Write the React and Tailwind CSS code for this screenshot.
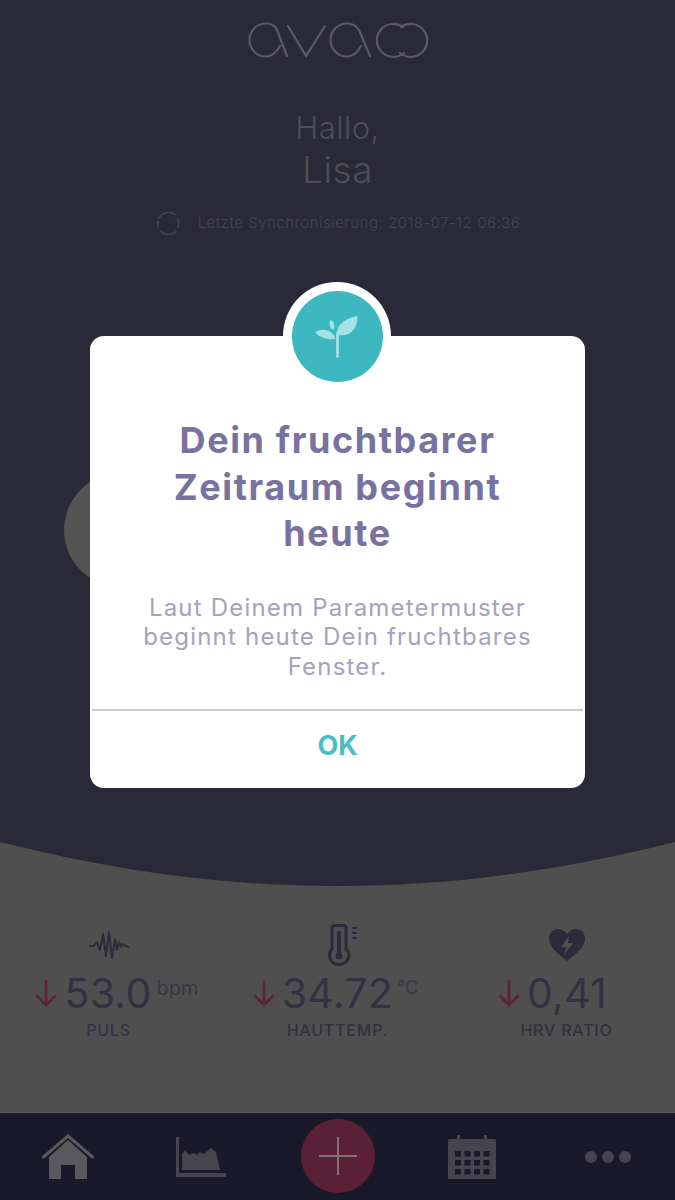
import React from 'react'

const sans = 'font-["Inter","Liberation_Sans",sans-serif]'

const AvaLogo = () => (
  <svg width="180" height="36" viewBox="249 22 180 36" fill="none" stroke="#5a5a60" strokeWidth="2.2" strokeLinecap="round">
    <path d="M281 46C277 53 272 56.500 267 56.500A16.500 16.500 0 0 1 267 23.500C272 23.500 276 25 278 30L288 56" />
    <path d="M289 26L307 56L326 26" />
    <path d="M362 46C358 53 353 56.500 348 56.500A16.500 16.500 0 0 1 348 23.500C353 23.500 357 25 360 30L371 56" />
    <path d="M404 27A16.500 16.500 0 1 0 405 53" />
    <path d="M402 27A16.500 16.500 0 1 1 401 53" />
  </svg>
)

const SyncIcon = () => (
  <svg width="26" height="26" viewBox="0 0 26 26" fill="none" stroke="#45454f" strokeWidth="1.6" strokeLinecap="round">
    <path d="M4 8A11 11 0 0 1 20 4.500" />
    <path d="M23 9A11 11 0 0 1 23 17" />
    <path d="M21 21.500A11 11 0 0 1 6 21.500" />
    <path d="M3 17A11 11 0 0 1 3 11" />
  </svg>
)

const SproutIcon = () => (
  <svg width="44" height="44" viewBox="315.500 314 44 44" fill="#a4e2e5">
    <rect x="336.600" y="332" width="2.800" height="26" rx="1.400" />
    <path d="M338 335C336 327 343 319 358 316C358 328 352 337 338 335Z" />
    <path d="M336 339C328 340 320 338 316 332C322 328 333 329 336 339Z" />
    <path d="M334 330C330 328 329 323 331 320C335 322 336 326 334 330Z" />
  </svg>
)

const PulseIcon = () => (
  <svg width="40" height="30" viewBox="0 0 40 30" fill="none" stroke="#2c2b3c" strokeWidth="2" strokeLinecap="round" strokeLinejoin="round">
    <path d="M1 16H5L8 12L11 20L14 4L17 26L20 2L23 28L26 9L28 20L30 12L32 17L34 14L39 17" />
  </svg>
)

const ThermoIcon = () => (
  <svg width="32" height="42" viewBox="0 0 32 42" fill="none" stroke="#2c2b3c" strokeWidth="3" strokeLinecap="round">
    <path d="M4 25V4C4 2.500 5 1.500 6.500 1.500H15.500C17 1.500 18 2.500 18 4V25C20.500 27 21 29 21 31.500C21 36.500 16.500 40.500 11 40.500C5.500 40.500 1.500 36.500 1.500 31.500C1.500 29 2 27 4 25Z" />
    <path d="M11 9V30" strokeWidth="4" />
    <circle cx="11" cy="32" r="3.600" fill="#2c2b3c" stroke="none" />
    <path d="M25 4H28M25 9H28M25 14H28" strokeWidth="2" />
  </svg>
)

const HeartBoltIcon = () => (
  <svg width="38" height="34" viewBox="0 0 38 34" fill="#2c2b3c">
    <path fillRule="evenodd" d="M19 33C12 27 1 20 1 10.500C1 4.500 5.500 1 10 1C14 1 17 3 19 6C21 3 24 1 28 1C32.500 1 37 4.500 37 10.500C37 20 26 27 19 33ZM21 8L13 19H18L16 27L25 15H20Z" />
  </svg>
)

const HomeIcon = () => (
  <svg width="52" height="46" viewBox="0 0 52 46" fill="#59595d">
    <path d="M7 23L26 6L45 23V45H33V31H19V45H7Z" />
    <path d="M1.500 23L26 2L50.500 23" fill="none" stroke="#59595d" strokeWidth="3" strokeLinecap="round" />
  </svg>
)

const ChartIcon = () => (
  <svg width="52" height="42" viewBox="0 0 52 42" fill="#46454f">
    <path d="M1 1H4V37H51V41H1Z" />
    <path d="M7 34V18L10 14L14 19L19 17L22 19L25 16L29 18L36 12L41 16L45 34Z" />
  </svg>
)

const CalendarIcon = () => {
  const cells = []
  for (let r = 0; r < 3; r++) {
    for (let c = 0; c < 4; c++) {
      cells.push(<rect key={`${r}-${c}`} x={8 + c * 9.500} y={17 + r * 9} width="6" height="5.500" fill="#1a1929" />)
    }
  }
  return (
    <svg width="50" height="46" viewBox="0 0 50 46" fill="#46454f">
      <rect x="1" y="5" width="48" height="40" rx="1.500" />
      <rect x="10" y="1" width="3" height="9" />
      <rect x="37" y="1" width="3" height="9" />
      {cells}
    </svg>
  )
}

const DownArrow = () => (
  <svg width="22" height="28" viewBox="0 0 22 28" fill="none" stroke="#5e2237" strokeWidth="2.6" strokeLinecap="round" strokeLinejoin="round" className="shrink-0">
    <path d="M11 2V26M2 17L11 26L20 17" />
  </svg>
)

const Stat = ({ icon, value, unit, label, offset, iconBox }) => (
  <div className="flex w-[229px] shrink-0 flex-col items-center">
    <div className={`flex h-[46px] items-center justify-center ${iconBox}`}>{icon}</div>
    <div className={`mt-[1px] flex h-[48px] items-center ${offset}`}>
      <DownArrow />
      <span className="ml-[7px] text-[41px] leading-none font-normal tracking-[0.3px] text-[#32313f]">{value}</span>
      {unit}
    </div>
    <div className="mt-[3px] text-[16px] leading-5 font-medium tracking-[0.8px] text-[#32313f]">{label}</div>
  </div>
)

export default function App() {
  return (
    <div className={`relative flex h-[1200px] w-[675px] flex-col overflow-hidden bg-[#4f4f4f] ${sans}`}>
      {/* dimmed home screen */}
      <div className="relative flex h-[842px] shrink-0 flex-col items-center bg-[#2a2937] pt-[22px]">
        <AvaLogo />
        <div className="mt-[52px] text-[31px] leading-[36px] font-light tracking-[0.5px] text-[#4e4e57]">Hallo,</div>
        <div className="mt-[4px] text-[37px] leading-[40px] font-light tracking-[0.5px] text-[#4e4e57]">Lisa</div>
        <div className="mt-[20px] flex items-center gap-[17px]">
          <SyncIcon />
          <span className="text-[15px] leading-5 font-light tracking-[0.5px] text-[#45454f]">Letzte Synchronisierung: 2018-07-12 06:36</span>
        </div>
        <div className="absolute top-[473px] left-[64px] h-[114px] w-[114px] rounded-full bg-[#555452]" />
      </div>
      <svg width="675" height="44" viewBox="0 0 675 44" className="block shrink-0" fill="#2a2937">
        <path d="M0 0H675C560 29 450 44 337 44C225 44 115 29 0 0Z" />
      </svg>

      <div className="flex justify-center pt-[36px]">
        <Stat
          icon={<PulseIcon />}
          iconBox=""
          value="53.0"
          offset="ml-[17px]"
          unit={<span className="mb-[10px] ml-[5px] text-[20px] leading-none text-[#32313f] opacity-80">bpm</span>}
          label="PULS"
        />
        <Stat
          icon={<ThermoIcon />}
          iconBox="ml-[12px]"
          value="34.72"
          offset="mr-[4px]"
          unit={<span className="mb-[10px] ml-[4px] text-[18px] leading-none text-[#32313f] opacity-80">°C</span>}
          label="HAUTTEMP."
        />
        <Stat icon={<HeartBoltIcon />} iconBox="" value="0,41" offset="mr-[28px]" unit={null} label="HRV RATIO" />
      </div>

      <nav className="mt-auto flex h-[88px] items-center border-t border-[#5a5a5a] bg-[#1a1929] pl-[42px]">
        <HomeIcon />
        <div className="ml-[81px]">
          <ChartIcon />
        </div>
        <div className="relative ml-[74px] -mt-[2px] h-[74px] w-[74px] rounded-full bg-[#5a2035]">
          <div className="absolute top-[36px] left-[18px] h-[2px] w-[38px] bg-[#7f7378]" />
          <div className="absolute top-[18px] left-[36px] h-[38px] w-[2px] bg-[#7f7378]" />
        </div>
        <div className="ml-[72px]">
          <CalendarIcon />
        </div>
        <div className="ml-[88px] flex gap-[5px]">
          <span className="h-[12px] w-[12px] rounded-full bg-[#46454f]" />
          <span className="h-[12px] w-[12px] rounded-full bg-[#46454f]" />
          <span className="h-[12px] w-[12px] rounded-full bg-[#46454f]" />
        </div>
      </nav>

      {/* fertile window dialog */}
      <div className="absolute top-[336px] left-[90px] flex h-[452px] w-[495px] flex-col items-center rounded-[14px] bg-white">
        <div className="absolute top-[-54px] left-[193px] flex h-[108px] w-[108px] items-center justify-center rounded-full bg-white">
          <div className="flex h-[91px] w-[91px] items-center justify-center rounded-full bg-[#3db8c0]">
            <SproutIcon />
          </div>
        </div>
        <h1 className="mt-[81px] w-[400px] text-center text-[36px] leading-[46.5px] font-bold tracking-[1.6px] text-[#7872a0]">
          Dein fruchtbarer Zeitraum beginnt heute
        </h1>
        <p className="mt-[36px] w-[410px] text-center text-[24px] leading-[29.5px] font-normal tracking-[1.2px] text-[#a5a2bd]">
          Laut Deinem Parametermuster beginnt heute Dein fruchtbares Fenster.
        </p>
        <div className="mt-[28px] h-[2px] w-[491px] bg-[#cccccc]" />
        <button className="flex flex-1 items-center justify-center pb-[6px] text-[27px] font-bold text-[#4dbcc4]">OK</button>
      </div>
    </div>
  )
}
